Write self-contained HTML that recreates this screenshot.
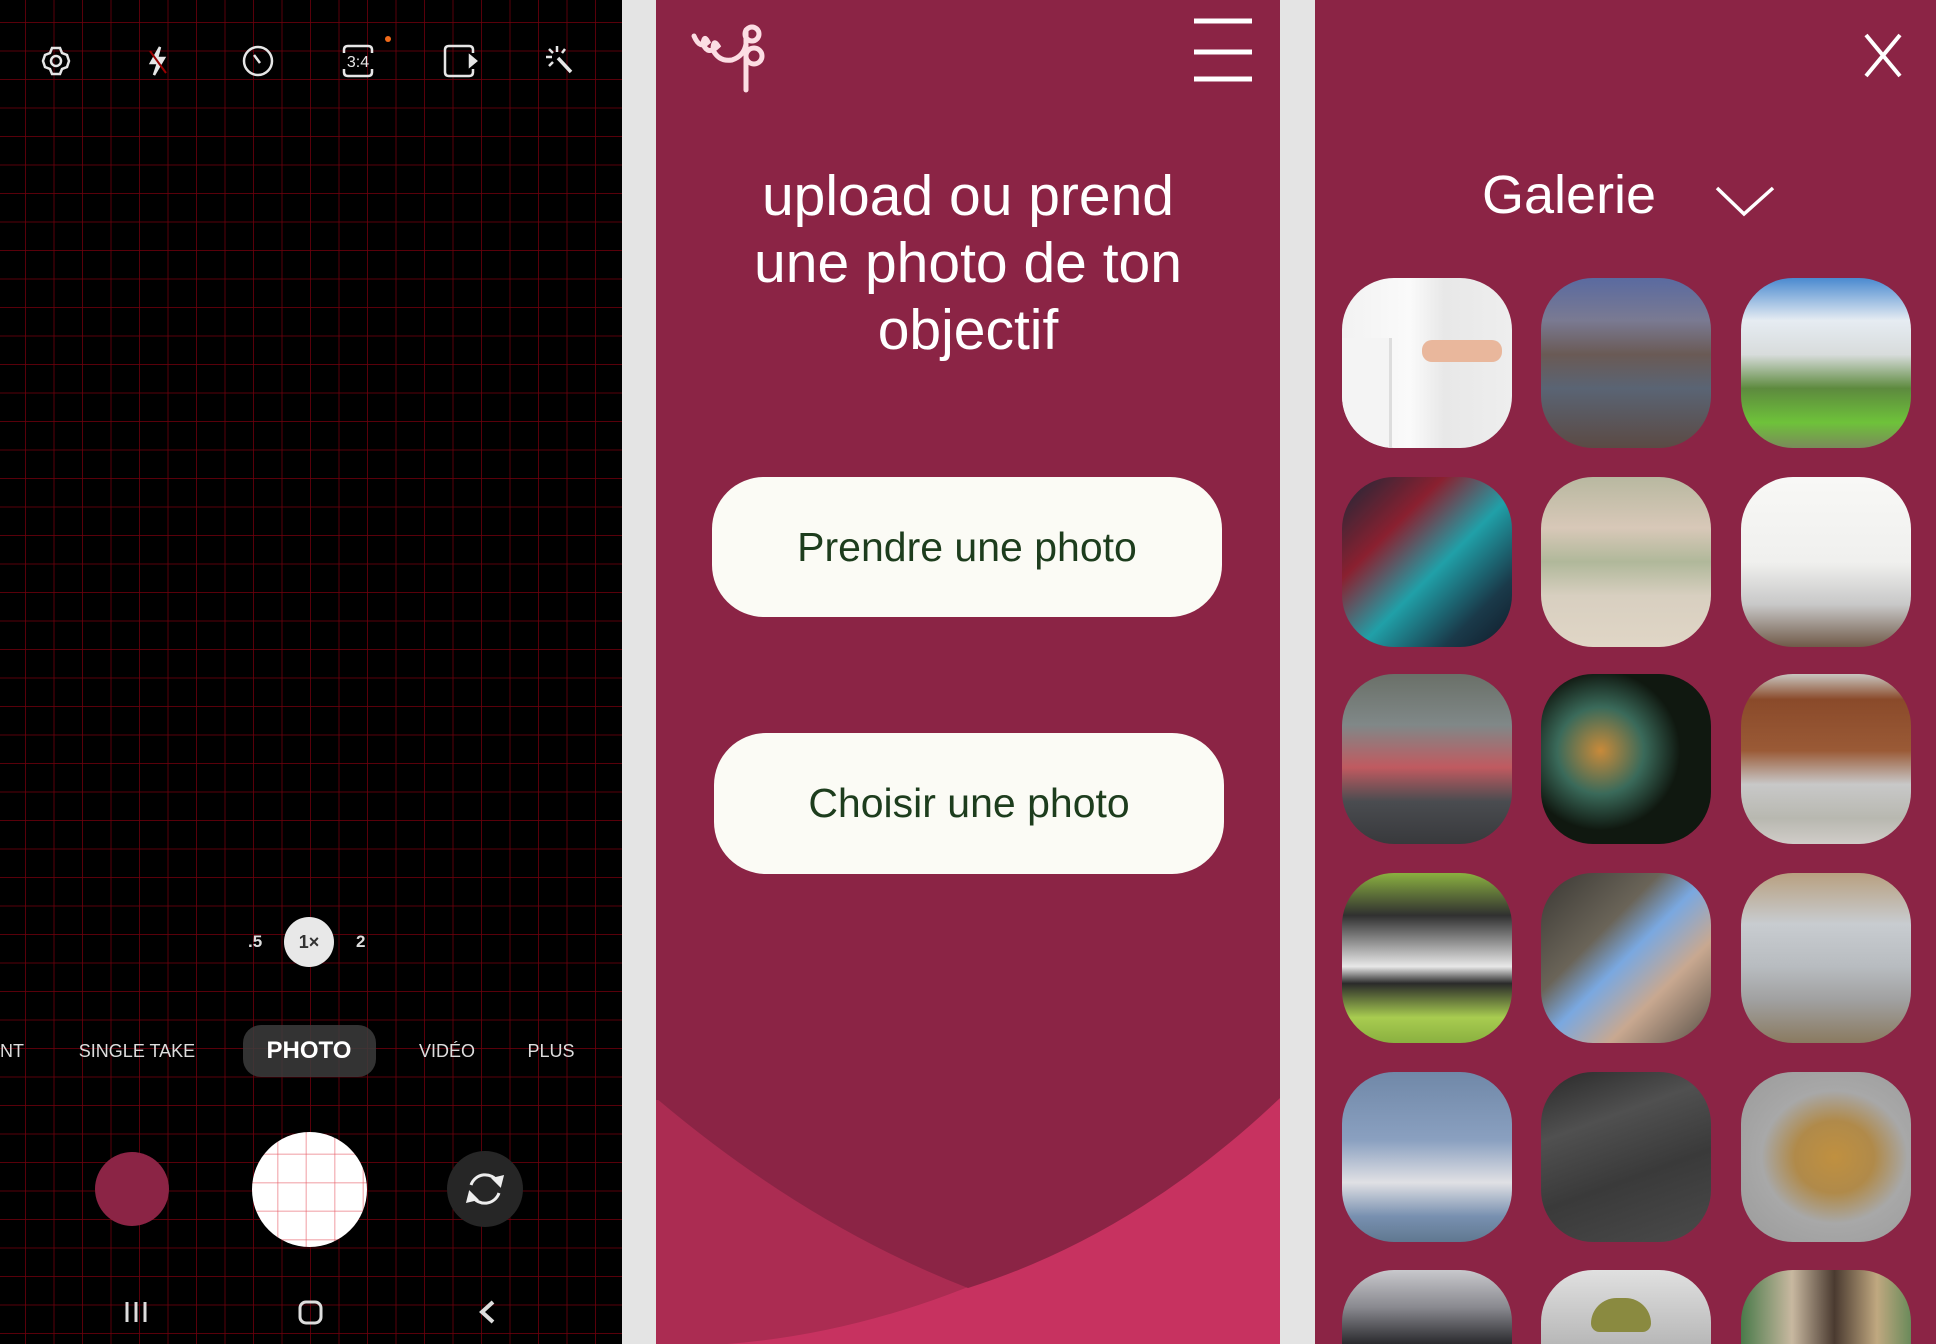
<!DOCTYPE html>
<html style="width:1936px;height:1344px;overflow:hidden"><head><meta charset="utf-8">
<style>
*{margin:0;padding:0;box-sizing:border-box}
body{width:1936px;height:1344px;background:#e4e4e4;position:relative;overflow:hidden;font-family:"Liberation Sans",sans-serif}
.cam{position:absolute;left:0;top:0;width:622px;height:1344px;background-color:#000;overflow:hidden;
background-image:linear-gradient(90deg,rgba(110,0,12,.8) 1px,transparent 1px),linear-gradient(0deg,rgba(110,0,12,.8) 1px,transparent 1px);
background-size:28.5px 28.5px;background-position:25px 23px}
.abs{position:absolute}
.ml{position:absolute;color:#ddd;font-size:18px;top:1041px;transform:translateX(-50%);white-space:nowrap}
.mid{position:absolute;left:656px;top:0;width:624px;height:1344px;background:#8b2445;overflow:hidden}
.h1{position:absolute;left:0;width:624px;top:163px;text-align:center;color:#fff;font-size:57px;line-height:67px}
.btn{position:absolute;background:#fbfbf5;border-radius:52px;color:#1d3d1d;font-size:41px;display:flex;align-items:center;justify-content:center}
.gal{position:absolute;left:1315px;top:0;width:621px;height:1344px;background:#8b2445;overflow:hidden}
.t{position:absolute;width:170px;height:170px;border-radius:52px;overflow:hidden}
</style></head><body>
<div class="cam">
<svg class="abs" style="left:0;top:0" width="622" height="120" fill="none" stroke="#e6e6e6" stroke-width="2.5">
<g transform="translate(56,61)"><path d="M-4,-13 L4,-13 L6,-8 L11,-6 L13,0 L11,6 L6,8 L4,13 L-4,13 L-6,8 L-11,6 L-13,0 L-11,-6 L-6,-8Z"/><circle r="5"/></g>
<g transform="translate(157,61)"><path d="M3,-14 L-6,2 L1,2 L-3,14 L7,-3 L0,-3 Z" fill="#e6e6e6"/><path d="M-7,-10 L9,12" stroke="#900" stroke-width="2"/></g>
<g transform="translate(258,61)"><circle r="14"/><path d="M-4,-6 L2,2"/></g>
<g transform="translate(358,61)"><path d="M-14,-8 V-11 Q-14,-15 -10,-15 H10 Q14,-15 14,-11 V-8 M-14,8 V11 Q-14,15 -10,15 H10 Q14,15 14,11 V8"/><text x="0" y="6" fill="#e6e6e6" stroke="none" font-size="16" text-anchor="middle" font-family="Liberation Sans">3:4</text></g>
<circle cx="388" cy="39" r="3" fill="#f06a1a" stroke="none"/>
<g transform="translate(459,61)"><path d="M14,-8 V-11 Q14,-15 10,-15 H-10 Q-14,-15 -14,-11 V11 Q-14,15 -10,15 H10 Q14,15 14,11 V8"/><path d="M11,-5 L17,0 L11,5Z" fill="#e6e6e6"/></g>
<g transform="translate(561,61)"><path d="M-3,-3 L10,11" stroke-width="3.5"/><path d="M-4,-15 V-9 M-15,-4 H-9 M-12,-12 L-8,-8 M4,-12 L1,-8 M-12,5 L-8,1"/></g>
</svg>
<div class="abs" style="left:248px;top:932px;color:#ddd;font-size:17px;font-weight:bold">.5</div>
<div class="abs" style="left:284px;top:917px;width:50px;height:50px;border-radius:50%;background:#e8e8e8;color:#333;font-size:18px;font-weight:bold;text-align:center;line-height:50px">1×</div>
<div class="abs" style="left:356px;top:932px;color:#ddd;font-size:17px;font-weight:bold">2</div>
<div class="ml" style="left:12px">NT</div>
<div class="ml" style="left:137px">SINGLE TAKE</div>
<div class="abs" style="left:243px;top:1025px;width:133px;height:52px;border-radius:18px;background:rgba(60,60,60,.85)"></div>
<div class="ml" style="left:309px;top:1037px;font-size:24px;font-weight:bold;color:#fff">PHOTO</div>
<div class="ml" style="left:447px">VIDÉO</div>
<div class="ml" style="left:551px">PLUS</div>
<div class="abs" style="left:95px;top:1152px;width:74px;height:74px;border-radius:50%;background:#8b2445"></div>
<div class="abs" style="left:252px;top:1132px;width:115px;height:115px;border-radius:50%;background-color:#fff;background-image:linear-gradient(90deg,rgba(230,90,100,.4) 1.5px,transparent 1.5px),linear-gradient(0deg,rgba(230,90,100,.4) 1.5px,transparent 1.5px);background-size:28.5px 28.5px;background-position:25px 23px"></div>
<div class="abs" style="left:447px;top:1151px;width:76px;height:76px;border-radius:50%;background:#262626"></div>
<svg class="abs" style="left:447px;top:1151px" width="76" height="76" fill="none" stroke="#eee" stroke-width="3"><path d="M24,34 A15,15 0 0 1 51,31 M52,42 A15,15 0 0 1 25,45"/><path d="M47,28 L53,34 L55,26Z M29,48 L23,42 L21,50Z" fill="#eee"/></svg>
<svg class="abs" style="left:0;top:1290px" width="622" height="44" fill="none" stroke="#ddd" stroke-width="3">
<path d="M127,12 V32 M136,12 V32 M145,12 V32"/><rect x="300" y="12" width="21" height="21" rx="6"/><path d="M493,12 L482,22 L493,32" stroke-width="4"/>
</svg>
</div>

<div class="mid">
<svg class="abs" style="left:0;top:0" width="624" height="1344">
<rect x="0" y="1100" width="624" height="244" fill="#ab2c52"/>
<path d="M0,1346 Q312,1352 624,1098 V1344 H0Z" fill="#c73260"/>
<path d="M0,0 H624 V1098 Q480,1235 312,1288 Q150,1225 0,1098Z" fill="#8b2445"/>
<g fill="none" stroke="#fcdde3" stroke-width="5" stroke-linecap="round">
<path d="M38,36 Q44,50 52,42 Q48,34 47,44 Q52,56 62,46 Q57,38 57,50 Q63,62 76,60 Q88,56 90,44"/>
<path d="M90,30 V90"/>
<circle cx="96" cy="34" r="7"/><circle cx="98" cy="56" r="8"/>
</g>
<g stroke="#fff" stroke-width="5"><path d="M538,21 H596 M538,52 H596 M538,79 H596"/></g>
</svg>
<div class="h1">upload ou prend<br>une photo de ton<br>objectif</div>
<div class="btn" style="left:56px;top:477px;width:510px;height:140px">Prendre une photo</div>
<div class="btn" style="left:58px;top:733px;width:510px;height:141px">Choisir une photo</div>
</div>

<div class="gal">
<svg class="abs" style="left:0;top:0" width="621" height="240" fill="none" stroke="#fff" stroke-width="4">
<path d="M551,35 L585,76 M585,35 L551,76"/>
<path d="M402,188 L429,214 L458,188" stroke-width="3.5"/>
</svg>
<div class="abs" style="left:167px;top:164px;color:#fff;font-size:54px">Galerie</div>
<div class="t" style="left:27px;top:278px;background:linear-gradient(90deg,#f2f2f2 0,#fafafa 40%,#e8e8e8 60%,#eee 100%)"><div class="abs" style="left:0;top:60px;width:50px;height:110px;background:#f4f4f4;border-right:3px solid #ddd"></div><div class="abs" style="left:80px;top:62px;width:80px;height:22px;background:#e9b79c;border-radius:10px"></div></div>
<div class="t" style="left:226px;top:278px;background:linear-gradient(180deg,#5a6aa0 0,#7a7a92 25%,#6a5a55 45%,#5a6474 65%,#5b4a44 100%)"></div>
<div class="t" style="left:426px;top:278px;background:linear-gradient(180deg,#4a8ad0 0,#e6ecf2 25%,#d8dcdc 45%,#5d8a3e 65%,#6ec23a 85%,#7a8a5a 100%)"></div>
<div class="t" style="left:27px;top:477px;background:linear-gradient(135deg,#1a2838 0,#8a2030 30%,#20a0a8 55%,#1a3a4a 80%,#101a28 100%)"></div>
<div class="t" style="left:226px;top:477px;background:linear-gradient(180deg,#b8b8a0 0,#d8c8b8 30%,#b0b89a 50%,#d8cfc0 70%,#e0d6c6 100%)"></div>
<div class="t" style="left:426px;top:477px;background:linear-gradient(180deg,#f8f8f6 0,#f0f0ee 50%,#c8c8c8 75%,#705a48 100%)"></div>
<div class="t" style="left:27px;top:674px;background:linear-gradient(180deg,#6a7068 0,#808888 30%,#c05a60 55%,#4a4c50 75%,#38393c 100%)"></div>
<div class="t" style="left:226px;top:674px;background:radial-gradient(circle at 35% 45%,#c88a3a 0,#3a6a5a 30%,#101810 55%),linear-gradient(#111,#222)"></div>
<div class="t" style="left:426px;top:674px;background:linear-gradient(180deg,#c8c6c0 0,#8a4a2a 15%,#9a5a36 45%,#c8c8c8 65%,#b8b8b0 85%,#d0ccc8 100%)"></div>
<div class="t" style="left:27px;top:873px;background:linear-gradient(180deg,#8ab040 0,#303030 25%,#e8e8e8 55%,#2a2a2a 65%,#a8cc50 85%,#8ab040 100%)"></div>
<div class="t" style="left:226px;top:873px;background:linear-gradient(135deg,#3a3834 0,#6a6458 35%,#7aa8e0 50%,#c8a890 70%,#585048 100%)"></div>
<div class="t" style="left:426px;top:873px;background:linear-gradient(180deg,#b8a080 0,#c8ccd0 30%,#b8bcc0 55%,#a0a0a0 75%,#8a7a60 100%)"></div>
<div class="t" style="left:27px;top:1072px;background:linear-gradient(180deg,#7088a8 0,#8aa0c0 40%,#e0e0e4 65%,#7890b0 85%,#607890 100%)"></div>
<div class="t" style="left:226px;top:1072px;background:linear-gradient(160deg,#2a2a2a 0,#505050 30%,#3a3a3a 60%,#4a4a4a 100%)"></div>
<div class="t" style="left:426px;top:1072px;background:radial-gradient(ellipse at 55% 50%,#c09040 0,#b08a4a 30%,#a8a8a8 55%,#9a9a9a 100%)"></div>
<div class="t" style="left:27px;top:1270px;height:74px;border-radius:52px 52px 0 0;background:linear-gradient(180deg,#c8c8cc 0,#8a8a90 50%,#2a2a2e 100%)"></div>
<div class="t" style="left:226px;top:1270px;height:74px;border-radius:52px 52px 0 0;background:linear-gradient(180deg,#e0e0e0 0,#b8b8b8 100%)"><div class="abs" style="left:50px;top:28px;width:60px;height:34px;border-radius:30px 30px 10px 10px;background:#8a8a40"></div></div>
<div class="t" style="left:426px;top:1270px;height:74px;border-radius:52px 52px 0 0;background:linear-gradient(90deg,#4a7a4a 0,#c8b8a0 30%,#4a3a30 55%,#c0a880 80%,#6a8a5a 100%)"></div>
</div>
</body></html>
